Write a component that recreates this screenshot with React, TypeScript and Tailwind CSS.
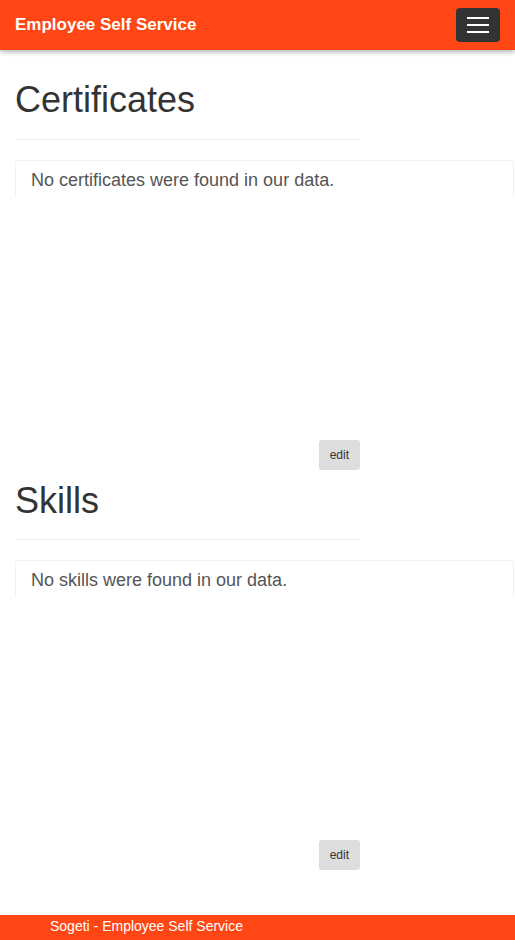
import { Fragment } from 'react'

const sections = [
  { title: 'Certificates', empty: 'No certificates were found in our data.', first: true },
  { title: 'Skills', empty: 'No skills were found in our data.', first: false },
]

function Section({ title, empty, first }: { title: string; empty: string; first: boolean }) {
  return (
    <section className={first ? 'mt-[30px]' : 'mt-[11px]'}>
      <div className="w-[345px] border-b border-[#eeeeee] pb-[9px] mb-[20px]">
        <h1 className="text-[36px] leading-[1.1] mb-[10px] text-[#333333]">{title}</h1>
      </div>
      <div className="h-[280px] -mr-[14px]">
        <div className="h-[37px] rounded-t-[4px] border border-b-0 border-[#f1f1f1] pt-[9px] px-[15px] text-[18px] leading-[20px] text-[#555555]">
          {empty}
        </div>
      </div>
      <div className="w-[345px] flex justify-end">
        <button className="h-[30px] px-[11px] rounded-[3px] bg-[#dddddd] text-[12px] text-[#333333]">edit</button>
      </div>
    </section>
  )
}

export default function App() {
  return (
    <div className="min-h-screen bg-white font-['Liberation_Sans',Arial,sans-serif] flex flex-col">
      <header className="h-[50px] bg-[#ff4614] flex items-center justify-between px-[15px] shadow-[0_2px_5px_rgba(0,0,0,0.3)] relative z-10">
        <span className="text-white font-bold text-[17px]">Employee Self Service</span>
        <button className="w-[44px] h-[34px] rounded-[4px] bg-[#333333] flex flex-col items-center justify-center gap-[5px]">
          {[0, 1, 2].map((i) => (
            <Fragment key={i}>
              <span className="block w-[22px] h-[2px] bg-white" />
            </Fragment>
          ))}
        </button>
      </header>

      <main className="px-[15px] overflow-hidden">
        {sections.map((s) => (
          <Section key={s.title} {...s} />
        ))}
      </main>

      <footer className="mt-auto h-[25px] bg-[#ff4614] pl-[50px] pb-[3px] flex items-center text-white text-[14px]">
        Sogeti - Employee Self Service
      </footer>
    </div>
  )
}
